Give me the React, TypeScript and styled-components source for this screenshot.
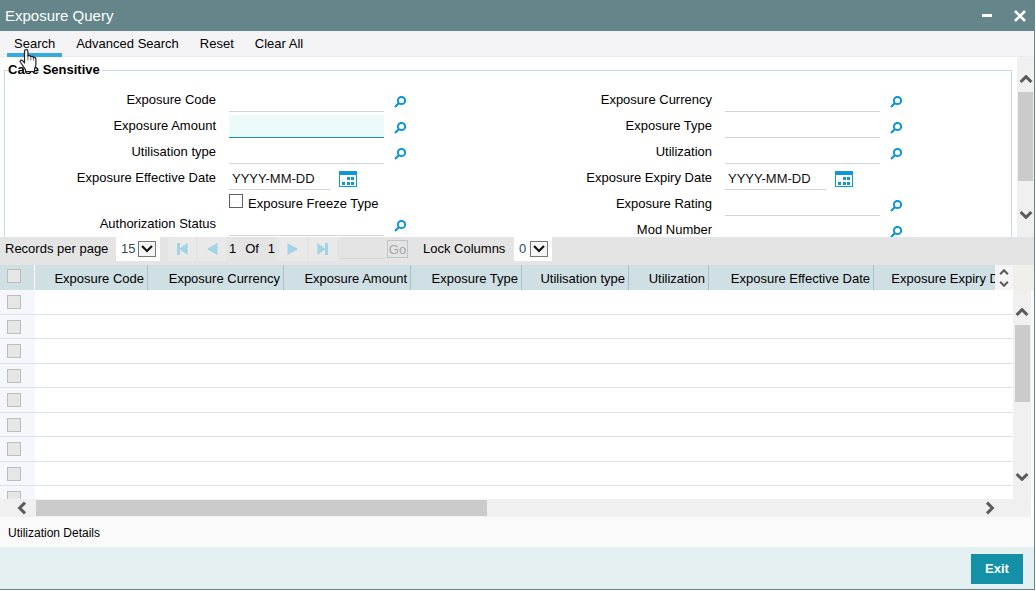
import React from "react";
import styled, { createGlobalStyle } from "styled-components";

const GlobalStyle = createGlobalStyle`
  *, *::before, *::after { box-sizing: border-box; }
  body {
    margin: 0;
    background: #fff;
    color: #000;
    font: 13px/16px "Liberation Sans", Arial, sans-serif;
  }
  button, input, select {
    font: inherit;
    color: inherit;
    margin: 0;
    padding: 0;
    border: 0;
    border-radius: 0;
    background: transparent;
  }
  svg { display: block; flex: none; }
`;

const Window = styled.main`
  display: flex;
  flex-direction: column;
  min-height: 480px;
  height: calc(100vh - 1px);
  margin-right: 1px;
  border: solid #64858a;
  border-width: 0 1px 1px 0;
`;

const TitleBar = styled.header`
  display: flex;
  align-items: center;
  justify-content: space-between;
  height: 31px;
  flex: none;
  padding-left: 5px;
  padding-right: 8px;
  margin-right: -1px;
  background: #64858a;
  color: #fff;
`;

const Title = styled.h1`
  margin: 0;
  font-size: 15px;
  line-height: 20px;
  font-weight: 400;
`;

const WindowButtons = styled.div`
  display: flex;
  gap: 20px;
`;

const IconButton = styled.button`
  display: flex;
  align-items: center;
  justify-content: center;
  flex: none;
`;

const Toolbar = styled.nav`
  display: flex;
  gap: 7px;
  flex: none;
  height: 26px;
  padding-left: 7px;
  background: #f4f4f6;
  border-bottom: 1px solid #ececee;
`;

const ToolbarItem = styled.div`
  position: relative;
  display: flex;
`;

const ToolbarButton = styled.button<{ $active?: boolean }>`
  height: 26px;
  padding: 3px 7px 0;
  border-bottom: 4px solid ${(p) => (p.$active ? "#36a9e1" : "transparent")};
  white-space: nowrap;
`;

const Pointer = styled.svg`
  position: absolute;
  left: 12px;
  top: 18px;
  z-index: 2;
  pointer-events: none;
`;

const FormPane = styled.section`
  display: flex;
  flex: none;
  height: 180px;
  overflow: hidden;
  padding-left: 4px;
`;

const CaseGroup = styled.fieldset`
  flex: 1;
  min-width: 0;
  height: 200px;
  margin: 5px 5px 0 0;
  padding: 8px 7px 0;
  border: 1px solid #ccd8df;
`;

const GroupLegend = styled.legend`
  margin-left: -4px;
  padding: 0 2px 0 0;
  font-weight: 700;
`;

const FieldColumns = styled.div`
  display: grid;
  grid-template-columns: 1fr 1fr;
`;

const FormRow = styled.div`
  display: grid;
  grid-template-columns: 204px minmax(0, 1fr);
  height: 26px;
`;

const FieldLabel = styled.label`
  padding-top: 6px;
  text-align: right;
  white-space: nowrap;
`;

const TextBox = styled.input<{ $focused?: boolean; $date?: boolean }>`
  width: ${(p) => (p.$date ? "101px" : "100%")};
  height: 23px;
  margin-top: 3px;
  padding: 0 3px;
  background: ${(p) => (p.$focused ? "#edfafa" : "#fff")};
  border-bottom: 1px solid ${(p) => (p.$focused ? "#1a8fc4" : "#d4d4d4")};
  outline: none;
  &::placeholder { color: #111; opacity: 1; }
`;

const LookupControl = styled.div`
  display: grid;
  grid-template-columns: minmax(0, 155px) 12px;
  column-gap: 10px;
  padding-left: 13px;
`;

const LookupButton = styled(IconButton)`
  height: 12px;
  margin-top: 10px;
`;

const DateControl = styled.div`
  display: flex;
  gap: 9px;
  padding-left: 13px;
`;

const CalendarButton = styled(IconButton)`
  height: 16px;
  margin-top: 7px;
`;

const CheckRow = styled.div`
  display: flex;
  gap: 5px;
  height: 20px;
  padding: 4px 0 0 217px;
  label { padding-top: 2px; white-space: nowrap; }
`;

const CheckBox = styled.input`
  appearance: none;
  display: block;
  flex: none;
  width: 14px;
  height: 14px;
  background: #fff;
  border: 1px solid #606060;
  &:disabled {
    background: #e6e6e6;
    border-color: #bcbcbc;
  }
`;

const ScrollBar = styled.div`
  display: flex;
  flex-direction: column;
  align-items: center;
  flex: none;
  width: 17px;
  padding: 18px 0;
  background: #f0f0f0;
`;

const Track = styled.div`
  flex: 1;
  width: 15px;
  margin: 9px 0 5px;
`;

const Thumb = styled.div<{ $length: string }>`
  height: ${(p) => p.$length};
  background: #cbcbcb;
`;

const Pager = styled.section`
  display: flex;
  align-items: center;
  flex: none;
  height: 28px;
  padding: 0 0 4px 5px;
  background: #e4e4e4;
`;

const PagerLabel = styled.label<{ $width: number }>`
  width: ${(p) => p.$width}px;
  white-space: nowrap;
`;

const SelectBox = styled.div<{ $width: number }>`
  position: relative;
  width: ${(p) => p.$width}px;
  height: 24px;
  background: #fff;
  svg { position: absolute; right: 4px; top: 4px; pointer-events: none; }
`;

const Select = styled.select`
  appearance: none;
  width: 100%;
  height: 24px;
  padding-left: 5px;
  color: #34495e;
`;

const PageNav = styled.div<{ $left: number; $right: number }>`
  display: flex;
  gap: 2px;
  margin-left: ${(p) => p.$left}px;
  margin-right: ${(p) => p.$right}px;
`;

const NavButton = styled(IconButton)`
  width: 28px;
  height: 24px;
  background: #e9e9e9;
`;

const PageStatus = styled.span`
  display: flex;
  justify-content: space-between;
  width: 46px;
`;

const PageInput = styled.input`
  width: 46px;
  height: 20px;
  margin: 0 1px 0 3px;
  border-bottom: 1px solid #d6d6d6;
`;

const GoButton = styled.button`
  width: 21px;
  height: 18px;
  margin-right: 15px;
  border: 1px solid #bfc4c7;
  color: #a5a5a5;
  line-height: 15px;
`;

const GridArea = styled.section`
  display: flex;
  flex: 1 1 0;
  min-height: 0;
  background: #fafafa;
`;

const TablePane = styled.div`
  position: relative;
  flex: 1;
  min-width: 0;
  overflow: hidden;
  background: #fff;
`;

const DataTable = styled.table`
  table-layout: fixed;
  width: 1021px;
  min-width: 100%;
  border-collapse: separate;
  border-spacing: 0;
`;

const HeadCell = styled.th`
  height: 25px;
  padding: 2px 3px 0 0;
  background: #cfdfe3;
  border-right: 1px solid #a9c1c8;
  font-weight: 400;
  text-align: right;
  white-space: nowrap;
  &:first-child {
    padding: 0 0 4px 7px;
    border-right-color: #fff;
  }
`;

const BodyRow = styled.tr`
  td { height: 25px; padding: 0; border-bottom: 1px solid #dde1ec; }
  &:nth-child(even) td { height: 24px; }
  td:first-child {
    padding-left: 7px;
    background: #f6f7fc;
  }
`;

const ColumnScroller = styled.div`
  position: absolute;
  top: 0;
  right: 0;
  display: flex;
  flex-direction: column;
  align-items: center;
  justify-content: center;
  gap: 6px;
  width: 18px;
  height: 25px;
  background: #f5f5f5;
`;

const GridSide = styled.div`
  display: flex;
  flex-direction: column;
  width: 21px;
  flex: none;
`;

const SideCorner = styled.div`
  height: 25px;
  flex: none;
  background: #f1efe9;
`;

const GridScroll = styled(ScrollBar)`
  flex: 1;
  width: 18px;
`;

const HorizontalScroll = styled.div`
  display: flex;
  align-items: center;
  flex: none;
  height: 18px;
  margin-right: 3px;
  padding: 0 34px 0 15px;
  background: #f0f0f0;
`;

const HorizontalTrack = styled.div`
  flex: 1;
  margin: 0 7px;
`;

const HorizontalThumb = styled.div<{ $length: string }>`
  width: ${(p) => p.$length};
  height: 16px;
  background: #cbcbcb;
`;

const DetailsBar = styled.div`
  flex: none;
  height: 30px;
  padding: 8px;
  background: #fafafa;
  font-size: 12px;
  a { color: #000; text-decoration: none; }
`;

const Footer = styled.footer`
  display: flex;
  justify-content: flex-end;
  flex: none;
  height: 42px;
  padding: 7px 11px 0;
  background: #e5f0f2;
`;

const ExitButton = styled.button`
  width: 52px;
  height: 30px;
  background: #1491a6;
  color: #fff;
  font-weight: 700;
`;

type Direction = "up" | "down" | "left" | "right";
const turns: Record<Direction, number> = { up: 0, right: 90, down: 180, left: 270 };

function Chevron({ to, small }: { to: Direction; small?: boolean }) {
  const size = small ? 10 : 14;
  const sideways = to === "left" || to === "right";
  return (
    <svg width={size} height={sideways ? size : size / 2 + 1} viewBox={sideways ? "0 0 14 14" : "0 3 14 8"}>
      <path
        d="M1.6 10 7 4.6l5.4 5.4"
        transform={`rotate(${turns[to]} 7 7)`}
        fill="none"
        stroke="#5c5c5c"
        strokeWidth={3}
      />
    </svg>
  );
}

function ScrollButton({ to, small }: { to: Direction; small?: boolean }) {
  return (
    <IconButton type="button" aria-label={`Scroll ${to}`}>
      <Chevron to={to} small={small} />
    </IconButton>
  );
}

function DropMark() {
  return (
    <svg width="18" height="16" viewBox="0 0 18 16">
      <rect x="0.5" y="0.5" width="17" height="15" fill="#f6f6f6" stroke="#777" />
      <path d="M4 5l5 5 5-5" fill="none" stroke="#111" strokeWidth="2.2" />
    </svg>
  );
}

function LookupIcon() {
  return (
    <svg width="12" height="12" viewBox="0 0 12 12" fill="none" stroke="#0f97d7">
      <circle cx="7.5" cy="4.5" r="3.6" strokeWidth="2" />
      <path d="M5 7 1 11" strokeWidth="2.3" />
    </svg>
  );
}

function CalendarIcon() {
  return (
    <svg width="18" height="16" viewBox="0 0 18 16">
      <path fill="#0f97d7" fillRule="evenodd" d="M0 0h18v16H0zM1 4v11h16V4z" />
      <path fill="#0f97d7" d="M8 6h3v3H8zM12 6h3v3h-3zM3 11h3v3H3zM8 11h3v3H8zM12 11h3v3h-3z" />
    </svg>
  );
}

function NavIcon({ kind }: { kind: "first" | "prev" | "next" | "last" }) {
  const flip = kind === "next" || kind === "last";
  const bar = kind === "first" || kind === "last";
  return (
    <svg width="12" height="12" viewBox="0 0 12 12" fill="#a5d3e6">
      <g transform={flip ? "matrix(-1 0 0 1 12 0)" : undefined}>
        {bar && <path d="M1 0h3v12H1z" />}
        <path d={bar ? "M11.6 0v12L3 6z" : "M11.5 0v12L.8 6z"} />
      </g>
    </svg>
  );
}

function HandIcon() {
  return (
    <Pointer width="18" height="24" viewBox="0 0 18 24">
      <path
        d="M5.5 14V2.5c0-2.4 3.4-2.4 3.4 0v4.7c.6-.9 2.6-.7 2.9.5.7-.7 2.4-.4 2.6.9.9-.5 2.5 0 2.5 1.6v5.6c0 2-1.4 3-1.4 4.800v1.900H6.600v-1.700C4.800 18 3.300 16.200 1.500 13.300.4 11.400 2.400 10.200 3.800 11.800z"
        fill="#fff"
        stroke="#222"
        strokeWidth="1.2"
        strokeLinejoin="round"
      />
      <path d="M8.900 7.200v4.200M11.800 8v3.400M14.400 9v2.600" fill="none" stroke="#444" strokeWidth="0.8" />
    </Pointer>
  );
}

function LookupField({ id, label, focused }: { id: string; label: string; focused?: boolean }) {
  return (
    <FormRow>
      <FieldLabel htmlFor={id}>{label}</FieldLabel>
      <LookupControl>
        <TextBox id={id} type="text" $focused={focused} />
        <LookupButton type="button" aria-label={`Look up ${label}`}>
          <LookupIcon />
        </LookupButton>
      </LookupControl>
    </FormRow>
  );
}

function DateField({ id, label }: { id: string; label: string }) {
  return (
    <FormRow>
      <FieldLabel htmlFor={id}>{label}</FieldLabel>
      <DateControl>
        <TextBox id={id} type="text" placeholder="YYYY-MM-DD" $date />
        <CalendarButton type="button" aria-label={`Pick ${label}`}>
          <CalendarIcon />
        </CalendarButton>
      </DateControl>
    </FormRow>
  );
}

const columns = [
  { name: "Exposure Code", width: 113 },
  { name: "Exposure Currency", width: 136 },
  { name: "Exposure Amount", width: 127 },
  { name: "Exposure Type", width: 111 },
  { name: "Utilisation type", width: 107 },
  { name: "Utilization", width: 80 },
  { name: "Exposure Effective Date", width: 165 },
  { name: "Exposure Expiry Date", width: 0 },
];
const rows = [1, 2, 3, 4, 5, 6, 7, 8, 9];

export default function App() {
  return (
    <>
      <GlobalStyle />
      <Window>
        <TitleBar>
          <Title>Exposure Query</Title>
          <WindowButtons>
            <IconButton type="button" aria-label="Minimize">
              <svg width="12" height="14" viewBox="0 0 12 14">
                <path d="M1 6.500h10" stroke="#fff" strokeWidth="3" />
              </svg>
            </IconButton>
            <IconButton type="button" aria-label="Close">
              <svg width="14" height="14" viewBox="0 0 14 14">
                <path d="m2 2 10 10m0-10-10 10" stroke="#fff" strokeWidth="2.6" />
              </svg>
            </IconButton>
          </WindowButtons>
        </TitleBar>

        <Toolbar>
          <ToolbarItem>
            <ToolbarButton type="button" $active>Search</ToolbarButton>
            <HandIcon />
          </ToolbarItem>
          <ToolbarButton type="button">Advanced Search</ToolbarButton>
          <ToolbarButton type="button">Reset</ToolbarButton>
          <ToolbarButton type="button">Clear All</ToolbarButton>
        </Toolbar>

        <FormPane>
          <CaseGroup>
            <GroupLegend>Case Sensitive</GroupLegend>
            <FieldColumns>
              <div>
                <LookupField id="code" label="Exposure Code" />
                <LookupField id="amount" label="Exposure Amount" focused />
                <LookupField id="utype" label="Utilisation type" />
                <DateField id="effective" label="Exposure Effective Date" />
                <CheckRow>
                  <CheckBox id="freeze" type="checkbox" />
                  <label htmlFor="freeze">Exposure Freeze Type</label>
                </CheckRow>
                <LookupField id="auth" label="Authorization Status" />
              </div>
              <div>
                <LookupField id="currency" label="Exposure Currency" />
                <LookupField id="type" label="Exposure Type" />
                <LookupField id="utilization" label="Utilization" />
                <DateField id="expiry" label="Exposure Expiry Date" />
                <LookupField id="rating" label="Exposure Rating" />
                <LookupField id="mod" label="Mod Number" />
              </div>
            </FieldColumns>
          </CaseGroup>
          <ScrollBar>
            <ScrollButton to="up" />
            <Track>
              <Thumb $length="78%" />
            </Track>
            <ScrollButton to="down" />
          </ScrollBar>
        </FormPane>

        <Pager>
          <PagerLabel htmlFor="per-page" $width={111}>Records per page</PagerLabel>
          <SelectBox $width={44}>
            <Select id="per-page" defaultValue="15">
              <option>15</option>
            </Select>
            <DropMark />
          </SelectBox>
          <PageNav $left={8} $right={3}>
            <NavButton type="button" aria-label="First page"><NavIcon kind="first" /></NavButton>
            <NavButton type="button" aria-label="Previous page"><NavIcon kind="prev" /></NavButton>
          </PageNav>
          <PageStatus>
            <span>1</span>
            <span>Of</span>
            <span>1</span>
          </PageStatus>
          <PageNav $left={4} $right={0}>
            <NavButton type="button" aria-label="Next page"><NavIcon kind="next" /></NavButton>
            <NavButton type="button" aria-label="Last page"><NavIcon kind="last" /></NavButton>
          </PageNav>
          <PageInput type="text" aria-label="Page number" />
          <GoButton type="button">Go</GoButton>
          <PagerLabel htmlFor="lock" $width={91}>Lock Columns</PagerLabel>
          <SelectBox $width={38}>
            <Select id="lock" defaultValue="0">
              <option>0</option>
            </Select>
            <DropMark />
          </SelectBox>
        </Pager>

        <GridArea>
          <TablePane>
            <DataTable>
              <colgroup>
                <col style={{ width: 35 }} />
                {columns.map((c) => (
                  <col key={c.name} style={{ width: c.width || undefined }} />
                ))}
              </colgroup>
              <thead>
                <tr>
                  <HeadCell>
                    <CheckBox type="checkbox" disabled aria-label="Select all rows" />
                  </HeadCell>
                  {columns.map((c) => (
                    <HeadCell key={c.name}>{c.name}</HeadCell>
                  ))}
                </tr>
              </thead>
              <tbody>
                {rows.map((r) => (
                  <BodyRow key={r}>
                    <td>
                      <CheckBox type="checkbox" disabled aria-label={`Select row ${r}`} />
                    </td>
                    <td colSpan={columns.length} />
                  </BodyRow>
                ))}
              </tbody>
            </DataTable>
            <ColumnScroller>
              <ScrollButton to="up" small />
              <ScrollButton to="down" small />
            </ColumnScroller>
          </TablePane>
          <GridSide>
            <SideCorner />
            <GridScroll>
              <ScrollButton to="up" />
              <Track>
                <Thumb $length="54%" />
              </Track>
              <ScrollButton to="down" />
            </GridScroll>
          </GridSide>
        </GridArea>

        <HorizontalScroll>
          <ScrollButton to="left" />
          <HorizontalTrack>
            <HorizontalThumb $length="48%" />
          </HorizontalTrack>
          <ScrollButton to="right" />
        </HorizontalScroll>

        <DetailsBar>
          <a href="#utilization-details">Utilization Details</a>
        </DetailsBar>

        <Footer>
          <ExitButton type="button">Exit</ExitButton>
        </Footer>
      </Window>
    </>
  );
}
